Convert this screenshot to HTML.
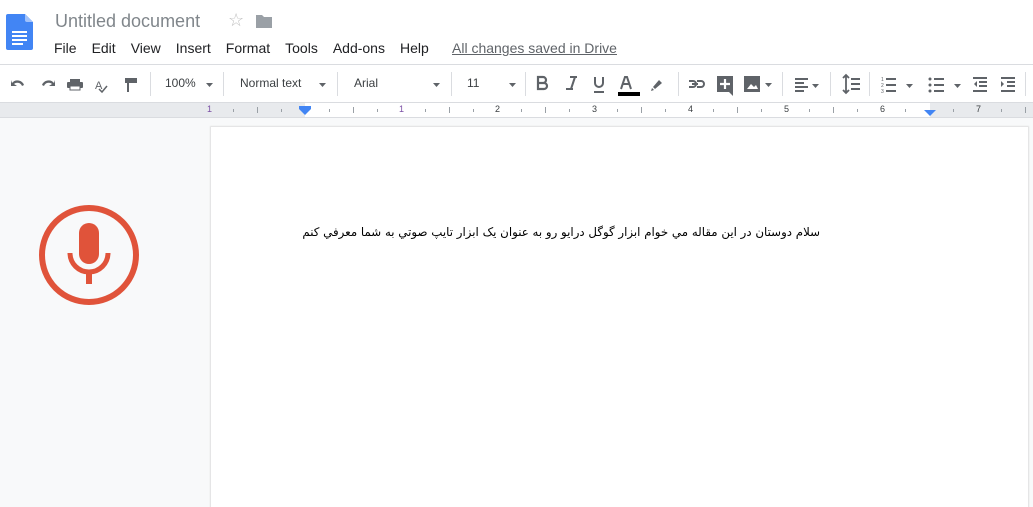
<!DOCTYPE html>
<html><head><meta charset="utf-8"><style>
*{margin:0;padding:0;box-sizing:border-box}
body{width:1033px;height:496px;overflow:hidden;background:#f8f9fa;font-family:"Liberation Sans",Arial,sans-serif;position:relative}
.top{position:absolute;left:0;top:0;width:1033px;height:65px;background:#fff;border-bottom:1px solid #dadce0}
.title{position:absolute;left:55px;top:11px;font-size:18px;color:#80868b}
.menu{position:absolute;left:54px;top:40px;font-size:14px;color:#202124}
.menu span{margin-right:15px}
.saved{position:absolute;left:452px;top:40px;font-size:14px;color:#5f6368;text-decoration:underline}
.tb{position:absolute;left:0;top:65px;width:1033px;height:38px;background:#fff;border-bottom:1px solid #dadce0}
.t{position:absolute;top:76px;font-size:12px;color:#3c4043}
.sep{position:absolute;top:72px;width:1px;height:24px;background:#dadce0}
.ruler{position:absolute;left:0;top:103px;width:1033px;height:15px;background:#e8eaed;border-bottom:1px solid #dadce0}
.rw{position:absolute;left:305px;top:0;width:625px;height:14px;background:#fff}
.rn{position:absolute;top:1px;font-size:9px;color:#3c4043}
.page{position:absolute;left:211px;top:127px;width:817px;height:380px;background:#fff;box-shadow:0 0 1px 1px #e0e0e0}
.txt{position:absolute;left:290px;top:225px;width:530px;direction:rtl;text-align:right;font-family:"DejaVu Sans",sans-serif;font-size:11.8px;color:#000;white-space:nowrap}
</style></head><body>
<div class="top">
<svg style="position:absolute;left:6px;top:14px" width="27" height="36" viewBox="0 0 27 36"><path d="M2 0h17l8 8v26a2 2 0 0 1-2 2H2a2 2 0 0 1-2-2V2a2 2 0 0 1 2-2z" fill="#4285f4"/><path d="M19 0l8 8h-6a2 2 0 0 1-2-2z" fill="#a1c2fa"/><rect x="6" y="17" width="15" height="2" fill="#fff"/><rect x="6" y="21" width="15" height="2" fill="#fff"/><rect x="6" y="25" width="15" height="2" fill="#fff"/><rect x="6" y="29" width="11" height="2" fill="#fff"/></svg>
<div class="title">Untitled document</div>
<div style="position:absolute;left:228px;top:10px;font-size:18px;color:#c0c0c0">☆</div>
<svg style="position:absolute;left:256px;top:14px" width="16" height="14"><path d="M0 1h6l2 2h8v11H0z" fill="#9aa0a6"/></svg>
<div class="menu"><span>File</span><span>Edit</span><span>View</span><span>Insert</span><span>Format</span><span>Tools</span><span>Add-ons</span><span>Help</span></div>
<div class="saved">All changes saved in Drive</div>
</div>
<div class="tb"></div>
<svg style="position:absolute;left:0;top:65px" width="1033" height="38" viewBox="0 0 1033 38" fill="#5f6368">
<path d="M12 18a7 7 0 0 1 12 2l-2 1a5 5 0 0 0-8-2l3 2h-6v-6z"/>
<path d="M54 18a7 7 0 0 0-12 2l2 1a5 5 0 0 1 8-2l-3 2h6v-6z"/>
<rect x="70" y="14" width="10" height="3"/><rect x="67" y="17" width="16" height="6" rx="1"/><rect x="70" y="21" width="10" height="4" fill="#fff" stroke="#5f6368"/>
<text x="95" y="24" font-size="11" font-family="Liberation Sans">A</text><path d="M99 24l3 3 5-6" stroke="#5f6368" fill="none" stroke-width="1.5"/>
<rect x="125" y="13" width="12" height="5"/><rect x="127" y="18" width="2" height="9"/>
<path d="M538 12h5a3 3 0 0 1 0 6h-5zM538 18h6a3 3 0 0 1 0 6h-6z" fill="none" stroke="#5f6368" stroke-width="2.2"/>
<path d="M570 12h7M566 24h7M575 12l-4 12" stroke="#5f6368" stroke-width="2" fill="none"/>
<path d="M595 12v6a4 4 0 0 0 8 0v-6M594 27h10" stroke="#5f6368" stroke-width="2" fill="none"/>
<path d="M621 24l4-12h2l4 12M623 19h6" stroke="#5f6368" stroke-width="2" fill="none"/><rect x="618" y="27" width="22" height="4" fill="#000"/>
<path d="M653 22l6-7 3 3-7 6zM652 23l2 2-3 1z"/>
<path d="M689 16h4a3 3 0 0 1 0 6h-4M697 16h4a3 3 0 0 1 0 6h-4M692 19h6" stroke="#5f6368" stroke-width="2" fill="none"/>
<rect x="717" y="11" width="16" height="16"/><path d="M725 14v10M720 19h10" stroke="#fff" stroke-width="2.2"/><path d="M729 27l4 4v-4z"/>
<rect x="744" y="11" width="16" height="16"/><path d="M747 24l4-5 3 3 2-2 2 4z" fill="#fff"/>
<path d="M765 18h7l-3.5 4z"/>
<rect x="795" y="13" width="13" height="2"/><rect x="795" y="17" width="9" height="2"/><rect x="795" y="21" width="13" height="2"/><rect x="795" y="25" width="9" height="2"/><path d="M812 19h7l-3.5 4z"/>
<path d="M843 13l3-3 3 3M843 25l3 3 3-3M846 11v16" stroke="#5f6368" stroke-width="1.8" fill="none"/><rect x="851" y="13" width="9" height="2"/><rect x="851" y="18" width="9" height="2"/><rect x="851" y="23" width="9" height="2"/>
<text x="881" y="16" font-size="5">1</text><text x="881" y="22" font-size="5">2</text><text x="881" y="28" font-size="5">3</text><rect x="886" y="13" width="10" height="2"/><rect x="886" y="19" width="10" height="2"/><rect x="886" y="25" width="10" height="2"/><path d="M906 19h7l-3.5 4z"/>
<circle cx="930" cy="14" r="1.5"/><circle cx="930" cy="20" r="1.5"/><circle cx="930" cy="26" r="1.5"/><rect x="934" y="13" width="10" height="2"/><rect x="934" y="19" width="10" height="2"/><rect x="934" y="25" width="10" height="2"/><path d="M954 19h7l-3.5 4z"/>
<rect x="973" y="12" width="14" height="2"/><rect x="979" y="16" width="8" height="2"/><rect x="979" y="20" width="8" height="2"/><rect x="973" y="25" width="14" height="2"/><path d="M977 16v6l-3-3z"/>
<rect x="1001" y="12" width="14" height="2"/><rect x="1007" y="16" width="8" height="2"/><rect x="1007" y="20" width="8" height="2"/><rect x="1001" y="25" width="14" height="2"/><path d="M1001 16v6l3-3z"/>
<path d="M206 18h7l-3.5 4zM319 18h7l-3.5 4zM433 18h7l-3.5 4zM509 18h7l-3.5 4z"/>
</svg>
<div class="t" style="left:165px">100%</div>
<div class="t" style="left:240px">Normal text</div>
<div class="t" style="left:354px">Arial</div>
<div class="t" style="left:467px">11</div>
<div class="sep" style="left:150px"></div><div class="sep" style="left:223px"></div><div class="sep" style="left:337px"></div><div class="sep" style="left:451px"></div><div class="sep" style="left:525px"></div><div class="sep" style="left:678px"></div><div class="sep" style="left:782px"></div><div class="sep" style="left:830px"></div><div class="sep" style="left:869px"></div><div class="sep" style="left:1025px"></div>
<div class="ruler"><div class="rw"></div>
<svg style="position:absolute;left:0;top:0" width="1033" height="15">
<g fill="#9aa0a6">
<rect x="233" y="6" width="1" height="3"/><rect x="281" y="6" width="1" height="3"/><rect x="329" y="6" width="1" height="3"/><rect x="377" y="6" width="1" height="3"/><rect x="425" y="6" width="1" height="3"/><rect x="473" y="6" width="1" height="3"/><rect x="521" y="6" width="1" height="3"/><rect x="569" y="6" width="1" height="3"/><rect x="617" y="6" width="1" height="3"/><rect x="665" y="6" width="1" height="3"/><rect x="713" y="6" width="1" height="3"/><rect x="761" y="6" width="1" height="3"/><rect x="809" y="6" width="1" height="3"/><rect x="857" y="6" width="1" height="3"/><rect x="905" y="6" width="1" height="3"/><rect x="953" y="6" width="1" height="3"/><rect x="1001" y="6" width="1" height="3"/>
<rect x="257" y="4" width="1" height="6"/><rect x="353" y="4" width="1" height="6"/><rect x="449" y="4" width="1" height="6"/><rect x="545" y="4" width="1" height="6"/><rect x="641" y="4" width="1" height="6"/><rect x="737" y="4" width="1" height="6"/><rect x="833" y="4" width="1" height="6"/><rect x="1025" y="4" width="1" height="6"/>
</g>
<path d="M299 3h12v3l-6 6-6-6z" fill="#4285f4"/><path d="M924 7h12l-6 6z" fill="#4285f4"/>
</svg>
<div class="rn" style="left:207px;color:#7b4fa5">1</div><div class="rn" style="left:399px;color:#7b4fa5">1</div><div class="rn" style="left:495px">2</div><div class="rn" style="left:592px">3</div><div class="rn" style="left:688px">4</div><div class="rn" style="left:784px">5</div><div class="rn" style="left:880px">6</div><div class="rn" style="left:976px">7</div>
</div>
<div class="page"></div>
<div class="txt">سلام دوستان در اين مقاله مي خوام ابزار گوگل درايو رو به عنوان يک ابزار تايپ صوتي به شما معرفي کنم</div>
<svg style="position:absolute;left:35px;top:201px" width="108" height="108" viewBox="35 201 108 108">
<circle cx="89" cy="255" r="47" fill="none" stroke="#e0533a" stroke-width="6"/>
<rect x="79" y="223" width="20" height="41" rx="10" fill="#e0533a"/>
<path d="M70 253a19 19 0 0 0 38 0" fill="none" stroke="#e0533a" stroke-width="5"/>
<rect x="86" y="270" width="6" height="14" fill="#e0533a"/>
</svg>
</body></html>
